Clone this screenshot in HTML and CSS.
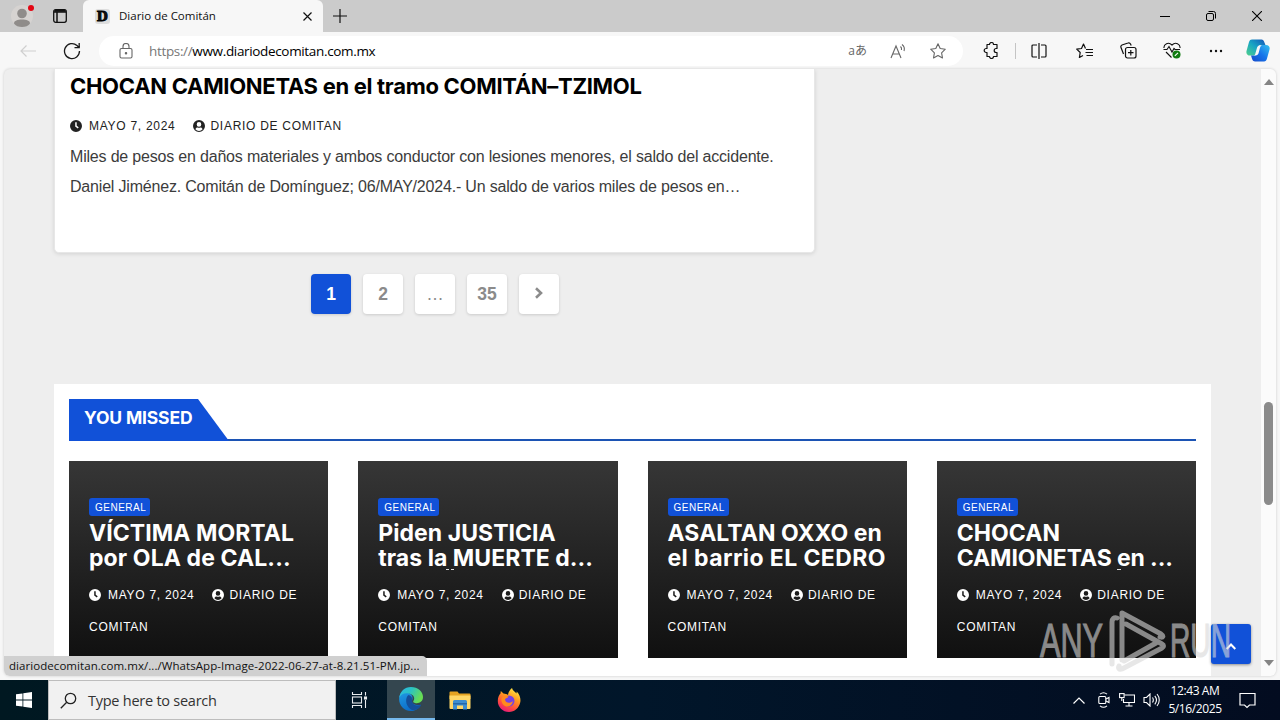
FILE: index.html
```html
<!DOCTYPE html>
<html lang="es">
<head>
  <meta charset="UTF-8">
  <meta name="viewport" content="width=device-width, initial-scale=1.0">
  <title>Diario de Comitán</title>
  <link rel="stylesheet" href="styles.css">
</head>
<body>

  <!-- shared icons -->
  <svg width="0" height="0" class="defs">
    <symbol id="clock" viewBox="0 0 12 12">
      <path fill="currentColor" fill-rule="evenodd" d="M6 0a6 6 0 1 0 0 12A6 6 0 0 0 6 0zM5.2 2.2h1.5v3.6l2 1.5-.9 1.2-2.6-1.9z"/>
    </symbol>
    <symbol id="user" viewBox="0 0 12 12">
      <path fill="currentColor" fill-rule="evenodd" d="M6 0a6 6 0 1 0 0 12A6 6 0 0 0 6 0zM6 2.1a2.3 2.3 0 1 1 0 4.6 2.3 2.3 0 0 1 0-4.6zM2.4 9.2C2.8 8 3.6 7.4 4.5 7.4c1 .4 2 .4 3 0 .9 0 1.7.6 2.1 1.8A4.7 4.7 0 0 1 2.4 9.2z"/>
    </symbol>
  </svg>

  <header class="tabbar">
    <svg class="avatar" width="26" height="26" viewBox="0 0 26 26">
      <circle cx="13" cy="13" r="11" fill="#d6d3d1"/>
      <circle cx="13" cy="10.5" r="4.8" fill="#8f8c8a"/>
      <path d="M5 20.5c0-3 3.500-4 8-4s8 1 8 4c-1.500 2.500-4.500 3.500-8 3.500s-6.500-1-8-3.500z" fill="#8f8c8a"/>
      <circle cx="22" cy="5" r="3" fill="#e30613"/>
    </svg>
    <svg class="workspace" width="14" height="14" viewBox="0 0 14 14" fill="none" stroke="#111" stroke-width="1.3">
      <rect x=".7" y=".7" width="12.6" height="12.6" rx="2"/>
      <path d="M1 3h12M4 3.5V13" stroke-width="1.5"/><path d="M1.5 1.8h11" stroke-width="2"/>
    </svg>
    <div class="tab">
      <span class="favicon">D</span>
      <span class="tab-title">Diario de Comitán</span>
      <svg width="9" height="9" viewBox="0 0 9 9" stroke="#111" stroke-width="1.2"><path d="M.5.5l8 8M8.5.5l-8 8"/></svg>
    </div>
    <svg class="plus" width="14" height="14" viewBox="0 0 14 14" stroke="#111" stroke-width="1.2"><path d="M7 0v14M0 7h14"/></svg>
    <div class="window-buttons">
      <svg width="10" height="10" viewBox="0 0 10 10" stroke="#000"><path d="M0 5.5h10"/></svg>
      <svg width="10" height="10" viewBox="0 0 10 10" fill="none" stroke="#000"><rect x=".5" y="2.5" width="7" height="7" rx="1.5"/><path d="M2.5.5h5a2 2 0 0 1 2 2v5"/></svg>
      <svg width="10" height="10" viewBox="0 0 10 10" stroke="#000" stroke-width="1.1"><path d="M0 0l10 10M10 0L0 10"/></svg>
    </div>
  </header>

  <nav class="toolbar">
    <svg class="back" width="16" height="12" viewBox="0 0 16 12" fill="none" stroke="#cfcfcf" stroke-width="1.2"><path d="M16 6H1M6.5.5L1 6l5.5 5.5"/></svg>
    <svg class="reload" width="18" height="18" viewBox="0 0 18 18" fill="none" stroke="#1a1a1a" stroke-width="1.3"><path d="M16.5 9A7.500 7.500 0 1 1 14 3.5l2 2M16.2 1v4.7h-4.7"/></svg>
    <div class="address">
      <svg width="14" height="16" viewBox="0 0 14 16" fill="none" stroke="#666" stroke-width="1.1"><rect x="1" y="5.5" width="12" height="9.5" rx="1.5"/><path d="M4 5.5V3.5a3 3 0 0 1 6 0v2"/><circle cx="7" cy="10.3" r=".7" fill="#666"/></svg>
      <span class="url"><span>https://</span>www.diariodecomitan.com.mx</span>
      <span class="translate">aあ</span>
      <svg class="read" width="17" height="16" viewBox="0 0 17 16" fill="none" stroke="#666" stroke-width="1.1"><path d="M1 15L6 3l5 12M2.8 11h6.5M10.5 3.5c1 1 1.300 2 1 3.5M12 1.5c2 1.500 2.800 4 2 6.5"/></svg>
      <svg class="star" width="16" height="16" viewBox="0 0 16 16" fill="none" stroke="#666" stroke-width="1.1" stroke-linejoin="round"><path d="M8 .8l2.2 4.7 5.1.7-3.7 3.6.9 5.2L8 12.5 3.5 15l.9-5.2L.7 6.2l5.1-.7z"/></svg>
    </div>
    <div class="tools">
      <svg width="16" height="17" viewBox="0 0 16 17" fill="none" stroke="#111" stroke-width="1.2" stroke-linejoin="round"><path d="M4 2.500h2.500a2 2 0 0 1 4 0H14v4h-.8a2 2 0 0 0 0 4h.8v4h-3.500a2 2 0 0 1-4 0H4v-4h-.8a2 2 0 0 1 0-4H4z"/></svg>
      <i class="divider"></i>
      <svg class="split" width="16" height="16" viewBox="0 0 16 16" fill="none" stroke="#111" stroke-width="1.2"><path d="M6 2H2a1 1 0 0 0-1 1v10a1 1 0 0 0 1 1h4M10 2h4a1 1 0 0 1 1 1v10a1 1 0 0 1-1 1h-4M8 0v16"/></svg>
      <svg class="favs" width="17" height="16" viewBox="0 0 17 16" fill="none" stroke="#111" stroke-width="1.2" stroke-linejoin="round"><path d="M9.5 5.5L7.5 1l-2 4.5-4.8.6 3.5 3.4-.8 5L7 12.5M10 6.500h7M9.5 9.500H17M10.5 12.500H17"/></svg>
      <svg class="collections" width="17" height="17" viewBox="0 0 17 17" fill="none" stroke="#111" stroke-width="1.2"><rect x="5.500" y="5.500" width="10.500" height="10.500" rx="2"/><path d="M10.800 8v5.500M8 10.700h5.500M3.500 12L1 5.500A2 2 0 0 1 2 3l6-2a2 2 0 0 1 2.500 1l.7 1.500"/></svg>
      <svg class="health" width="18" height="17" viewBox="0 0 18 17" fill="none" stroke="#111" stroke-width="1.1"><path d="M1 6C.5 2 5.500-.5 9 3c3.500-3.500 8.500-1 8 3M.5 7.500H4l2-3 3 5.500 2-3.500 1 1h5M3 10l5.500 5.500"/><circle cx="13.500" cy="12.500" r="4" fill="#107c10" stroke="none"/><path d="M11.800 13.800l3.200-3" stroke="#fff"/></svg>
      <svg class="more" width="14" height="4" viewBox="0 0 14 4" fill="#111"><circle cx="2" cy="2" r="1.2"/><circle cx="7" cy="2" r="1.2"/><circle cx="12" cy="2" r="1.2"/></svg>
      <svg class="copilot" width="24" height="23" viewBox="0 0 24 23">
        <defs>
          <linearGradient id="cpa" x1="0" y1="1" x2="1" y2="0"><stop offset="0" stop-color="#4fd08c"/><stop offset=".5" stop-color="#18a5c4"/><stop offset="1" stop-color="#1453b8"/></linearGradient>
          <linearGradient id="cpb" x1="0" y1="1" x2="1" y2="0"><stop offset="0" stop-color="#1649c9"/><stop offset=".5" stop-color="#1674ea"/><stop offset="1" stop-color="#35c1ee"/></linearGradient>
        </defs>
        <path fill="url(#cpa)" d="M6 .5h9.500c2.500 0 3 3.500 4 5.500h-5c-2 0-2.500 2-3 4l-1 4c-.5 2-1 2.500-3 2.500H3.500C1 16.500 0 14 .5 12L3 3C3.500 1.300 4.500.5 6 .5z"/>
        <path fill="url(#cpb)" d="M18 22.500H9c-2.500 0-3-3-4-6h3c2 0 2.500-1.500 3-3.500l1.200-4C12.800 7 13.500 6 15.500 6H20c3 0 4.200 2 3.500 4.500l-2.500 9c-.5 2-1.500 3-3 3z"/>
        <path fill="#f7f7f7" d="M10.800 9.500c.5-2.200 1.700-3.300 3.700-3.300h1.700c-1 0-1.700 1-2.200 2.500l-1.300 5c-.5 1.800-1.500 2.800-3.200 2.800H7.500c1.300 0 1.700-1 2-2.500z"/>
      </svg>
    </div>
  </nav>

  <div class="viewport">
    <main class="page">
      <article class="post">
        <h2>CHOCAN CAMIONETAS en el tramo COMITÁN–TZIMOL</h2>
        <div class="meta"><svg><use href="#clock"/></svg><span class="date">MAYO 7, 2024</span><svg><use href="#user"/></svg><span class="author">DIARIO DE COMITAN</span></div>
        <p>Miles de pesos en daños materiales y ambos conductor con lesiones menores, el saldo del accidente.<br>Daniel Jiménez. Comitán de Domínguez; 06/MAY/2024.- Un saldo de varios miles de pesos en…</p>
      </article>

      <div class="pagination">
        <a class="current">1</a>
        <a>2</a>
        <a class="dots">…</a>
        <a>35</a>
        <a class="next"><svg width="8" height="12" viewBox="0 0 8 12" fill="none" stroke="#8b8b8b" stroke-width="2.6"><path d="M1 1.3L6 6 1 10.7"/></svg></a>
      </div>

      <section class="missed">
        <div class="missed-head"><h3>YOU MISSED</h3></div>
        <div class="cards">
          <div class="card">
            <span class="badge">GENERAL</span>
            <h4>VÍCTIMA MORTAL<br><span class="wide">por OLA de CAL...</span></h4>
            <div class="meta"><svg><use href="#clock"/></svg><span class="date">MAYO 7, 2024</span><svg><use href="#user"/></svg><span class="author">DIARIO DE<br>COMITAN</span></div>
          </div>
          <div class="card">
            <span class="badge">GENERAL</span>
            <h4 class="accents">Piden JUSTICIA<br>tras la MUERTE d...</h4>
            <div class="meta"><svg><use href="#clock"/></svg><span class="date">MAYO 7, 2024</span><svg><use href="#user"/></svg><span class="author">DIARIO DE<br>COMITAN</span></div>
          </div>
          <div class="card">
            <span class="badge">GENERAL</span>
            <h4>ASALTAN OXXO en<br><span class="wider">el barrio EL CEDRO</span></h4>
            <div class="meta"><svg><use href="#clock"/></svg><span class="date">MAYO 7, 2024</span><svg><use href="#user"/></svg><span class="author">DIARIO DE<br>COMITAN</span></div>
          </div>
          <div class="card">
            <span class="badge">GENERAL</span>
            <h4 class="accent">CHOCAN<br><span class="narrow">CAMIONETAS en ...</span></h4>
            <div class="meta"><svg><use href="#clock"/></svg><span class="date">MAYO 7, 2024</span><svg><use href="#user"/></svg><span class="author">DIARIO DE<br>COMITAN</span></div>
          </div>
        </div>
      </section>

      <a class="to-top"><svg width="10" height="7" viewBox="0 0 10 7" fill="none" stroke="#fff" stroke-width="2"><path d="M.7 6L5 1.5 9.3 6"/></svg></a>
    </main>
    <div class="scrollbar">
      <i class="up"></i>
      <i class="thumb"></i>
      <i class="down"></i>
    </div>
    <div class="status">diariodecomitan.com.mx/.../WhatsApp-Image-2022-06-27-at-8.21.51-PM.jp...</div>
  </div>

  <footer class="taskbar">
    <div class="start"><svg width="16" height="16" viewBox="0 0 16 16" fill="#fff"><path d="M0 2.3l6.500-.9v6.200H0zM7.3 1.3L16 0v7.600H7.300zM0 8.400h6.500v6.200L0 13.700zM7.300 8.400H16V16l-8.700-1.300z"/></svg></div>
    <div class="search">
      <svg width="17" height="17" viewBox="0 0 17 17" fill="none" stroke="#222" stroke-width="1.3"><circle cx="10.5" cy="6.5" r="5.2"/><path d="M6.7 10.3L.8 16.2"/></svg>
      <span>Type here to search</span>
    </div>
    <div class="app taskview"><svg width="18" height="16" viewBox="0 0 18 16" fill="none" stroke="#e8ecee" stroke-width="1.1"><path d="M1.5 0v2.500h9V0M1.5 16v-2.500h9V16M14.5 0v3.500M14.5 8v8"/><rect x="1.5" y="5" width="9" height="6"/><rect x="13.5" y="5" width="2" height="2" fill="#fff"/></svg></div>
    <div class="app active">
      <svg width="24" height="24" viewBox="0 0 24 24">
        <defs>
          <linearGradient id="ea" x1="0" y1="0" x2="1" y2=".4"><stop offset="0" stop-color="#2bb6e8"/><stop offset=".5" stop-color="#2bc3c3"/><stop offset="1" stop-color="#68dd53"/></linearGradient>
          <linearGradient id="eb" x1="0" y1="0" x2=".5" y2="1"><stop offset="0" stop-color="#219be4"/><stop offset="1" stop-color="#0b6bc7"/></linearGradient>
        </defs>
        <path fill="url(#eb)" d="M.2 11C1 4 6 3.500 10 6c4 2.500 4 5 3.200 7-1.200 3 1.800 5.800 8.800 4.800C19.500 22.500 15.500 24 12 24 4 24-.5 17.500.2 11z"/>
        <path fill="#144f9a" d="M9.500 8C6.500 10 5.500 18 12 22.500c1.500 1 4.500.5 6.500-.5 1.800-1 3-2.600 3.800-4.300-4 2-9.300.3-9.300-4.200 0-2.500.5-4-3.500-5.500z"/>
        <path fill="url(#ea)" d="M.2 11C1 4.500 5.500 0 12 0c7 0 12 4.800 12 10 0 4-3 6.200-6.200 6.200-2.600 0-4.300-1-3.400-2.200 2-2.700.3-6.500-4.400-7.500C5.500 5.500 1.700 7 .2 11z"/>
      </svg>
    </div>
    <div class="app">
      <svg width="22" height="19" viewBox="0 0 22 19">
        <path fill="#e5a322" d="M.5 1.500A1 1 0 0 1 1.500.5h7l1.500 2h10.500a1 1 0 0 1 1 1V8H.5z"/>
        <path fill="#ffd767" d="M.5 4.500h21V17a1 1 0 0 1-1 1h-19a1 1 0 0 1-1-1z"/>
        <path fill="#3e8ed0" d="M4 18.500v-8a1.500 1.500 0 0 1 1.500-1.500h11a1.500 1.500 0 0 1 1.500 1.500v8h-4v-4H8v4z"/>
        <path fill="#2568a8" d="M4 12h14v1.500H4z"/>
      </svg>
    </div>
    <div class="app">
      <svg width="24" height="24" viewBox="0 0 24 24">
        <defs><linearGradient id="ff" x1=".8" y1="0" x2=".3" y2="1"><stop offset="0" stop-color="#fff04a"/><stop offset=".4" stop-color="#ff9a1f"/><stop offset=".75" stop-color="#ff4742"/><stop offset="1" stop-color="#e5197c"/></linearGradient></defs>
        <path fill="url(#ff)" d="M15 0c.5 2.500 3 3.500 4.500 5.500l.2-2C23 7 24 11 23.200 14.500 22 20 17.500 24 12 24 5.500 24 .8 19 .8 13 .8 9.500 2 7 3.500 5.500L3.800 3l2.700 2.500c2 .2 3 .4 4.500 1.500C11.500 4.500 12.500 1.500 15 0z"/>
        <circle cx="12" cy="13" r="5.5" fill="#7542e4"/>
        <path fill="#ff8a1e" d="M4.500 10.500C6 8 9 7.500 11.500 8.500c-.5 1.500-3 1.500-3.500 3 .5 3.500 5 4.500 8 1.500-1 5-5 6.500-8 5-2.500-1.300-4-4-3.500-7.500z"/>
      </svg>
    </div>
    <div class="tray">
      <svg width="12" height="7" viewBox="0 0 12 7" fill="none" stroke="#fff" stroke-width="1.2"><path d="M.5 6.500L6 1l5.500 5.500"/></svg>
      <svg class="meet" width="12" height="16" viewBox="0 0 12 16" fill="none" stroke="#fff" stroke-width="1.1"><rect x=".8" y="4.500" width="7" height="7" rx="1"/><path d="M8 7l3-1.500v5L8 9M2 2.200C4 .5 7 .5 9 2.200M2 13.800c2 1.700 5 1.700 7 0"/></svg>
      <svg class="net" width="16" height="14" viewBox="0 0 16 14" fill="none" stroke="#fff" stroke-width="1.1"><path d="M5.500 2h10v7.500h-11V6M10 9.500V13M6.500 13h7"/><rect x=".6" y=".6" width="4.500" height="4"/><path d="M2.800 4.500V8"/></svg>
      <svg class="vol" width="17" height="14" viewBox="0 0 17 14" fill="none" stroke="#fff" stroke-width="1.1"><path d="M1 4.500h2.500L7 1v12L3.500 9.500H1zM9.500 4.500c1 1.500 1 3.500 0 5M11.800 2.800c2 2.500 2 6 0 8.500M14 1c3 3.500 3 8.500 0 12"/></svg>
      <div class="time">12:43 AM<br>5/16/2025</div>
      <svg width="17" height="17" viewBox="0 0 17 17" fill="none" stroke="#fff" stroke-width="1.2"><path d="M1 1.500h15v11.500h-5.500L8 15.500 5.500 13H1z"/></svg>
    </div>
  </footer>

  <svg class="watermark" width="220" height="70" viewBox="0 0 220 70">
    <text x="4" y="51" textLength="63" lengthAdjust="spacingAndGlyphs">ANY</text>
    <text x="134" y="51" textLength="61" lengthAdjust="spacingAndGlyphs">RUN</text>
    <path d="M76 58V16c0-3 2-5 5-4M86 54V7l39 21c3 2 2 4-1 3M90 18l36 20c2 1 2 3 0 4L86 63c-3 1-4-1-3-3M120 37L88 55"/>
  </svg>

</body>
</html>
```
FILE: styles.css
```css
* { box-sizing: border-box; }

body {
  margin: 0;
  width: 1280px;
  height: 720px;
  overflow: hidden;
  display: flex;
  flex-direction: column;
  position: relative;
  background: #f7f7f7;
  font-family: "Open Sans", "Noto Sans", sans-serif;
  color: #111;
}

svg { flex: none; }
.defs { position: absolute; }

/* browser tabs */
.tabbar {
  height: 32px;
  flex: none;
  display: flex;
  align-items: center;
  background: #cbcbcb;
}

.avatar { margin-left: 9px; }
.workspace { margin-left: 18px; }

.tab {
  height: 32px;
  width: 240px;
  margin-left: 16px;
  padding: 0 11px 0 12px;
  display: flex;
  align-items: center;
  background: #f7f7f7;
  border-radius: 6px 6px 0 0;
}

.favicon {
  width: 15px;
  height: 15px;
  border-radius: 3px;
  background: #ddd;
  text-align: center;
  font: 900 15px/15px "Liberation Serif", serif;
  -webkit-text-stroke: 1px #000;
}

.tab-title {
  flex: 1;
  margin-left: 9px;
  padding-bottom: 1px;
  font-size: 11.5px;
}

.plus { margin-left: 10px; }

.window-buttons {
  margin-left: auto;
  margin-right: 18px;
  display: flex;
  gap: 36px;
}

/* address bar */
.toolbar {
  height: 37px;
  flex: none;
  display: flex;
  align-items: center;
  background: #f7f7f7;
}

.back { margin-left: 20px; }
.reload { margin-left: 27px; }

.address {
  width: 864px;
  height: 30px;
  margin-left: 18px;
  padding: 0 17px 0 20px;
  display: flex;
  align-items: center;
  background: #fff;
  border-radius: 15px;
}

.url {
  flex: 1;
  margin-left: 16px;
  font-size: 13.5px;
  letter-spacing: -.34px;
  color: #000;
}

.url span { color: #777; }

.translate {
  font: 12px/16px "Open Sans", "Noto Sans CJK JP", sans-serif;
  color: #666;
}

.read { margin-left: 23px; }
.star { margin-left: 23px; }

.tools {
  margin-left: 20px;
  display: flex;
  align-items: center;
}

.divider {
  width: 1px;
  height: 16px;
  margin-left: 16px;
  background: #c4c4c4;
}

.split { margin-left: 15px; }
.favs { margin-left: 29px; }
.collections { margin-left: 27px; }
.health { margin-left: 26px; }
.more { margin-left: 28px; }
.copilot { margin-left: 23px; }

/* web page */
.viewport {
  position: relative;
  height: 607px;
  flex: none;
  margin: 0 4px;
  display: flex;
  background: #eee;
  border-radius: 6px;
  overflow: hidden;
  box-shadow: 0 0 3px rgba(0, 0, 0, .18);
}

.page {
  position: relative;
  width: 1257px;
  padding-left: 50px;
}

.post {
  width: 761px;
  height: 184px;
  padding: 4px 15px;
  background: #fff;
  border: 1px solid #e7e7e7;
  border-top: 0;
  border-radius: 0 0 5px 5px;
  box-shadow: 0 1px 4px rgba(0, 0, 0, .12);
}

h2, h3, h4 {
  margin: 0;
  font-family: Inter, sans-serif;
  font-weight: 700;
}

.post h2 {
  font-size: 22px;
  line-height: 26px;
  letter-spacing: -.3px;
  color: #000;
  white-space: nowrap;
}

.meta {
  font: 12px/32px "Liberation Sans", sans-serif;
  letter-spacing: .72px;
  color: #222;
}

.meta svg {
  width: 12px;
  height: 12px;
  vertical-align: -2px;
}

.meta .date { margin: 0 18px 0 7px; }
.meta .author { margin-left: 5px; }

.post .meta { margin-top: 11px; }

.post p {
  margin: 0;
  font: 16px/30px "Liberation Sans", sans-serif;
  letter-spacing: -.19px;
  color: #3c3c3c;
  white-space: nowrap;
}

.pagination {
  width: 761px;
  margin-top: 21px;
  display: flex;
  justify-content: center;
  gap: 12px;
}

.pagination a {
  width: 40px;
  height: 40px;
  padding: 1px 0 0 1px;
  display: flex;
  align-items: center;
  justify-content: center;
  background: #fff;
  border-radius: 4px;
  box-shadow: 0 1px 3px rgba(0, 0, 0, .15);
  font: bold 17.5px "Liberation Sans", sans-serif;
  color: #8b8b8b;
}

.pagination .current {
  background: #1151d8;
  color: #fff;
}

.pagination .dots { font-weight: normal; }
.pagination .next { padding: 0 0 2px; }

.missed {
  width: 1157px;
  height: 292px;
  margin-top: 70px;
  padding: 15px;
  background: #fff;
}

.missed-head {
  height: 42px;
  border-bottom: 2px solid #1c54b4;
}

.missed h3 {
  width: 160px;
  height: 42px;
  padding-left: 15px;
  font-size: 17.5px;
  line-height: 38px;
  letter-spacing: -.15px;
  color: #fff;
  background: #1151d8;
  clip-path: polygon(0 0, 129px 0, 160px 100%, 0 100%);
}

.cards {
  margin-top: 20px;
  display: grid;
  grid-template-columns: repeat(4, 1fr);
  gap: 30px;
}

.card {
  height: 197px;
  padding: 37px 20px 0;
  background: linear-gradient(#363636, #101010);
}

.badge {
  display: block;
  width: 61px;
  height: 18px;
  padding-left: 6px;
  background: #1151d8;
  border-radius: 3px;
  font: 10px/19px "Liberation Sans", sans-serif;
  letter-spacing: .5px;
  color: #fff;
}

.card h4 {
  position: relative;
  height: 54px;
  margin-top: 5px;
  font-size: 23px;
  line-height: 25px;
  letter-spacing: .05px;
  color: #fff;
  white-space: nowrap;
}

.card .wide { letter-spacing: .1px; }
.card .wider { letter-spacing: .4px; }
.card .narrow { letter-spacing: -.1px; }

.card .meta {
  margin-top: 4px;
  color: #fff;
  white-space: nowrap;
}

/* tops of the accents on the clipped third line */
.accents::after, .accent::after {
  content: "";
  position: absolute;
  top: 48px;
  left: 68px;
  width: 3px;
  height: 1px;
  background: #ddd;
}

.accents::after { box-shadow: 5px 0 #ddd; }
.accent::after { left: 160px; width: 4px; }

.to-top {
  position: absolute;
  right: 10px;
  bottom: 12px;
  width: 40px;
  height: 40px;
  padding-top: 4px;
  display: flex;
  align-items: center;
  justify-content: center;
  background: #1151d8;
  border-radius: 3px;
  box-shadow: 0 1px 3px rgba(0, 0, 0, .4);
}

.scrollbar {
  width: 15px;
  padding: 10px 0;
  display: flex;
  flex-direction: column;
  align-items: center;
  background: #fbfbfb;
}

.up, .down {
  border: 5px solid transparent;
  border-top: 0;
  border-bottom: 6px solid #858585;
}

.down {
  margin-top: auto;
  border-bottom: 0;
  border-top: 6px solid #858585;
}

.thumb {
  width: 9px;
  height: 103px;
  margin-top: 317px;
  border-radius: 5px;
  background: #8b8b8b;
}

.status {
  position: absolute;
  left: 0;
  bottom: 0;
  width: 423px;
  height: 20px;
  padding-left: 5px;
  border-radius: 0 5px 0 5px;
  background: #d0d0d0;
  font-size: 11.5px;
  line-height: 20px;
  letter-spacing: .06px;
  white-space: nowrap;
}

/* windows taskbar */
.taskbar {
  height: 40px;
  flex: none;
  margin-top: 4px;
  display: flex;
  background: linear-gradient(90deg, #001821, #01162a 50%, #030c20);
}

.start {
  width: 48px;
  display: flex;
  align-items: center;
  justify-content: center;
}

.search {
  width: 288px;
  padding-left: 11px;
  display: flex;
  align-items: center;
  background: #f1f1f1;
  border: 1px solid #bdbdbd;
  font-size: 14.5px;
  letter-spacing: -.25px;
  color: #333;
}

.search span { margin-left: 11px; }

.app {
  width: 49px;
  display: flex;
  align-items: center;
  justify-content: center;
}

.app.active {
  width: 48px;
  background: #34464f;
  border-bottom: 2px solid #76b9ed;
}

.taskview {
  width: 51px;
  padding-right: 3px;
}

.tray {
  flex: 1;
  display: flex;
  align-items: center;
  justify-content: flex-end;
  padding-right: 24px;
}

.meet { margin-left: 13px; }
.net { margin-left: 9px; }
.vol { margin-left: 8px; }

.time {
  width: 54px;
  margin: 0 17px 0 8px;
  font-size: 12px;
  line-height: 18px;
  letter-spacing: -.4px;
  text-align: center;
  white-space: nowrap;
  color: #fff;
}

.watermark {
  position: absolute;
  left: 1036px;
  top: 606px;
  opacity: .6;
}

.watermark text {
  font: 49px "Liberation Sans Narrow", "Liberation Sans", sans-serif;
  fill: #d8d8d8;
  stroke: #d8d8d8;
  stroke-width: 1.2;
}

.watermark path {
  fill: none;
  stroke: #d8d8d8;
  stroke-width: 5;
  stroke-linecap: round;
  stroke-linejoin: round;
}
```
